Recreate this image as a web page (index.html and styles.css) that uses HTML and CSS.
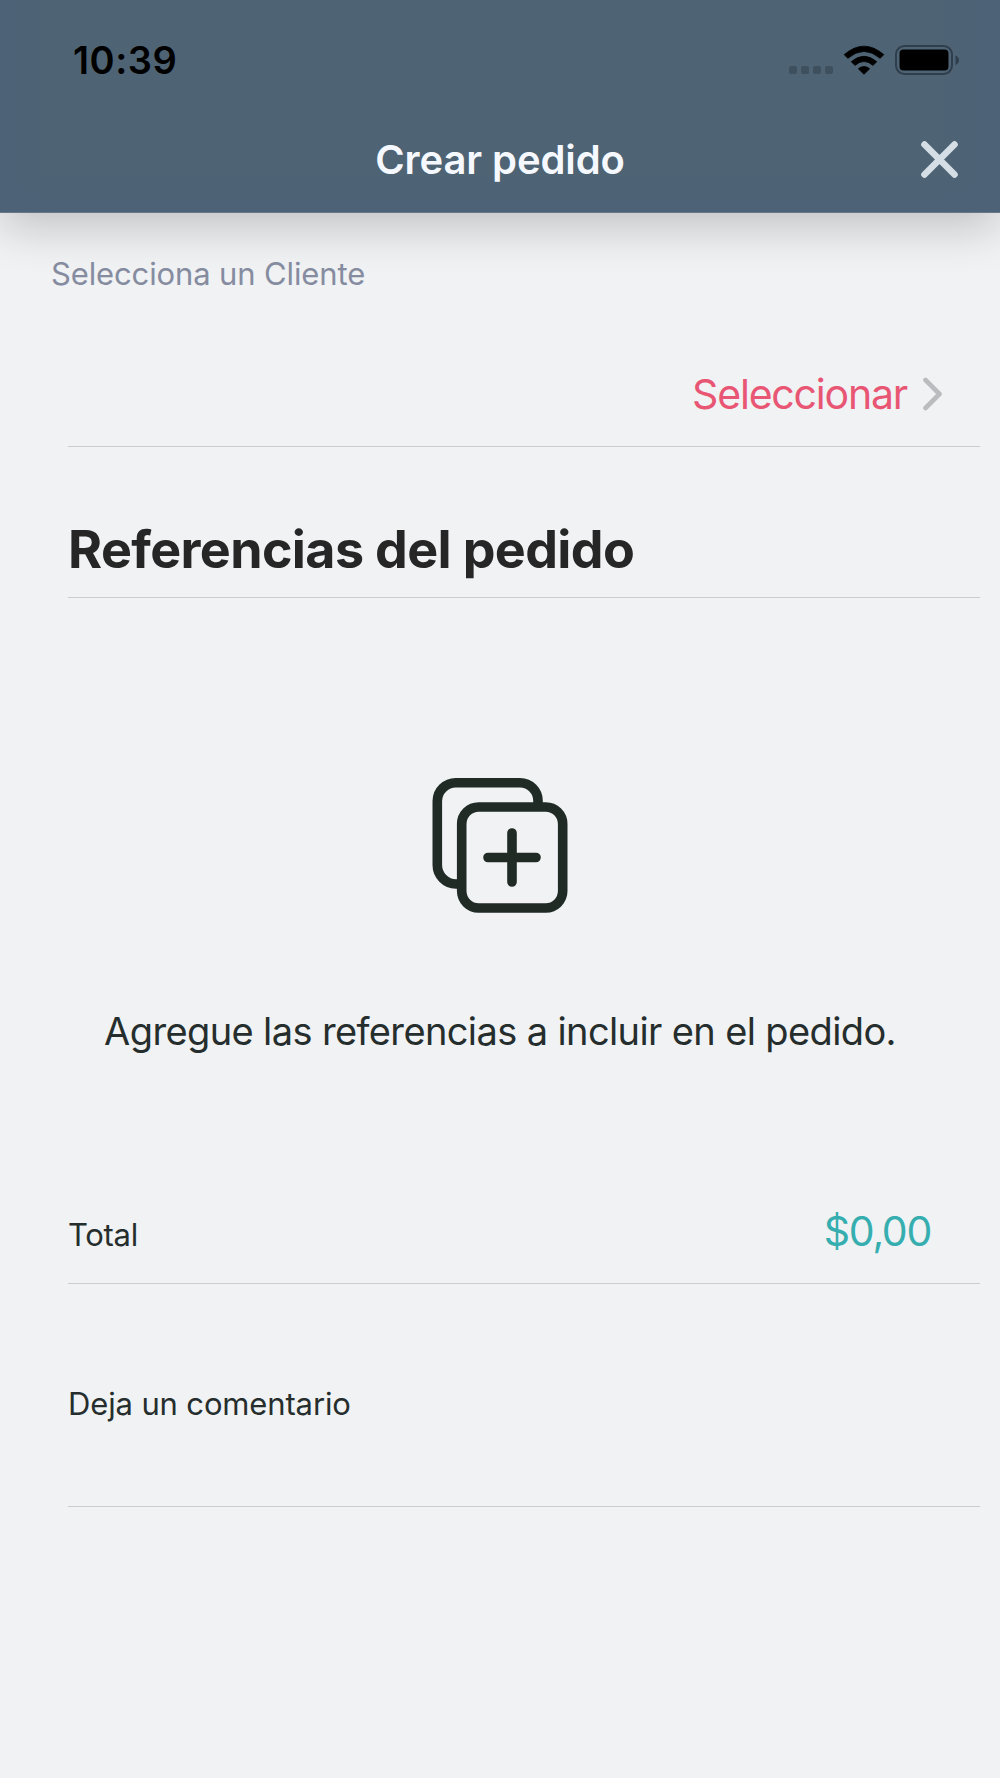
FILE: index.html
```html
<!DOCTYPE html>
<html lang="es">
<head>
<meta charset="utf-8">
<title>Crear pedido</title>
<link rel="stylesheet" href="styles.css">
</head>
<body>
<header class="header">
  <div class="status">
    <span class="time">10:39</span>
    <div class="indicators">
      <span class="cell"><i></i><i></i><i></i><i></i></span>
      <svg class="wifi" width="42" height="30" viewBox="0 0 42 30"><path d="M1.2 9.6Q21-7.2 40.8 9.6L37.2 13.3Q21-.4 4.8 13.3ZM8.3 16.7Q21 5.900 33.700 16.700L30 20.400Q21 12.600 12 20.400ZM15.300 23.700Q21 19.300 26.700 23.700L21 29.300Z" stroke="#000" stroke-width=".8" stroke-linejoin="round"/></svg>
      <svg class="battery" width="65" height="30" viewBox="0 0 65 30"><rect x="1" y="1" width="56" height="28" rx="8.500" fill="none" stroke="#2f3e4c" stroke-width="2"/><rect x="4.500" y="4.500" width="49" height="21" rx="4" fill="#000"/><path d="M60.500 10.500Q64 12 64 15.300T60.500 20Z" fill="#2f3e4c"/></svg>
    </div>
  </div>
  <div class="titlebar">
    <h1 class="title">Crear pedido</h1>
    <svg class="close" width="38" height="38" viewBox="0 0 38 38"><path d="M4.500 3.500L34.500 33.500M34.500 3.500L4.500 33.500" stroke="#d5dee5" stroke-width="6.600" stroke-linecap="round"/></svg>
  </div>
</header>
<main class="form">
  <p class="label">Selecciona un Cliente</p>
  <div class="row select">
    <span class="select-action">Seleccionar</span>
    <svg width="19" height="34" viewBox="0 0 19 34"><path d="M2.500 3L16.500 17L2.500 31" fill="none" stroke="#bbbcbf" stroke-width="4.600" stroke-linecap="round" stroke-linejoin="round"/></svg>
  </div>
  <h2 class="row heading">Referencias del pedido</h2>
  <section class="empty">
    <svg width="136" height="136" viewBox="0 0 136 136" fill="none" stroke="#202b26" stroke-width="9.600"><path d="M106 29V24A18 18 0 0 0 88 5.700H24A18.500 18.500 0 0 0 5.300 24V88A19 19 0 0 0 24 107H29"/><rect x="29.700" y="30" width="101" height="101" rx="17"/><path d="M80 56V105M56 80.500H104" stroke-linecap="round"/></svg>
    <p class="empty-text">Agregue las referencias a incluir en el pedido.</p>
  </section>
  <div class="row total">
    <span class="total-label">Total</span>
    <span class="total-amount">$0,00</span>
  </div>
  <div class="row comment">Deja un comentario</div>
</main>
</body>
</html>
```
FILE: styles.css
```css
* { box-sizing: border-box; margin: 0; padding: 0; }
body {
  min-height: 1778px;
  background: #f0f2f4;
  color: #262e2d;
  font-family: Inter, "Liberation Sans", sans-serif;
  font-weight: 400;
  white-space: nowrap;
}
svg { display: block; flex: none; }
.header {
  height: 213px;
  background:
    linear-gradient(to bottom, transparent 170px, #4d6177 212px),
    linear-gradient(to right, #4d6177 0, #4e6373 50px, #4e6373 930px, #4d6177 100%);
  border-bottom: 1px solid #687785;
  box-shadow: 0 14px 44px rgba(0, 0, 0, .2);
}
.status {
  display: flex;
  align-items: center;
  justify-content: space-between;
  height: 120px;
  padding: 0 40px 0 73px;
}
.time { color: #000; font-size: 38px; font-weight: 600; line-height: 46px; letter-spacing: .5px; }
.indicators { display: flex; align-items: center; }
.cell { display: flex; gap: 4px; margin: 19px 10px 0 0; }
.cell i { width: 8px; height: 8px; border-radius: 2.5px; background: #3e4f5d; }
.wifi { margin-right: 10px; }
.titlebar {
  display: grid;
  grid-template-columns: 80px 1fr 80px;
  align-items: center;
  height: 79px;
}
.title {
  grid-column: 2;
  color: #f5f9ff;
  font-size: 40px;
  font-weight: 600;
  line-height: 48px;
  letter-spacing: -.1px;
  text-align: center;
}
.close { justify-self: start; }
.form { display: flex; flex-direction: column; padding: 0 20px 0 68px; }
.label {
  height: 127px;
  margin-left: -17px;
  padding-top: 42px;
  color: #868ca0;
  font-size: 31px;
  line-height: 38px;
  letter-spacing: -.13px;
}
.row { display: flex; align-items: center; border-bottom: 1px solid #cbccd1; }
.select { height: 107px; justify-content: flex-end; gap: 16px; padding: 2px 38px 0 0; }
.select-action { color: #e85674; font-size: 41px; letter-spacing: -1.2px; }
.heading {
  height: 97px;
  margin-top: 54px;
  color: #262626;
  font-size: 52px;
  font-weight: 700;
  letter-spacing: -.63px;
}
.empty {
  display: flex;
  flex-direction: column;
  align-items: center;
  height: 579px;
  margin: 0 -20px 0 -68px;
  padding-top: 179px;
}
.empty-text { margin-top: 95px; font-size: 38px; line-height: 46px; letter-spacing: -.62px; }
.total { height: 107px; justify-content: space-between; padding: 2px 49px 0 0; }
.total-label { padding-top: 6px; font-size: 31px; letter-spacing: -.3px; }
.total-amount { color: #36aeb0; font-size: 41px; letter-spacing: -1.3px; }
.comment { height: 223px; padding-top: 16px; font-size: 31px; letter-spacing: -.14px; }
```
